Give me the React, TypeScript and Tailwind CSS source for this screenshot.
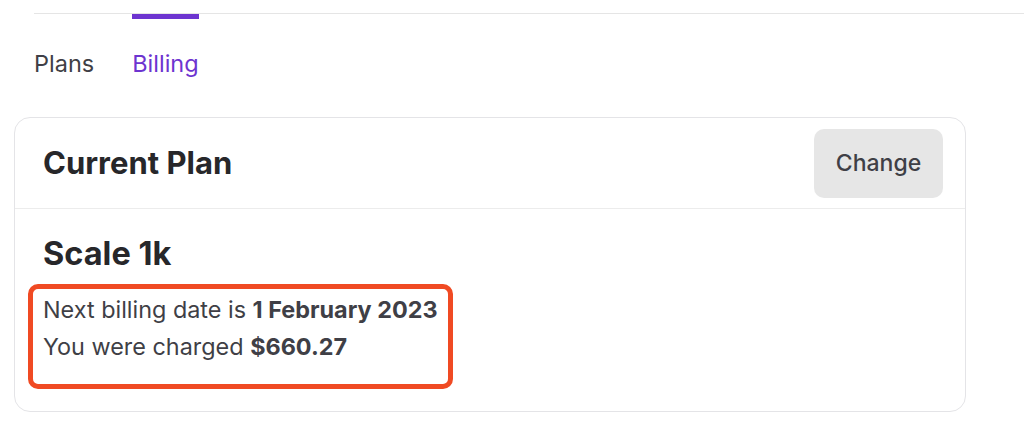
export default function App() {
  return (
    <div className="min-h-screen bg-white font-['Inter','Liberation_Sans',sans-serif] text-[#27272a]">
      <nav className="ml-[34px] mt-[13px] flex gap-[38px] border-t-[1.5px] border-[#e5e5e5]">
        <button className="border-t-[5px] border-transparent pt-[30px] text-[23.5px] leading-[30px] text-[#3f3f46]">
          Plans
        </button>
        <button className="border-t-[5px] border-[#6d34d0] pt-[30px] text-[23.5px] leading-[30px] text-[#6d34d0]">
          Billing
        </button>
      </nav>

      <section className="mx-[14px] mt-[38px] w-[952px] rounded-[16px] border border-[#e4e4e7]">
        <header className="flex h-[91px] items-center justify-between border-b border-[#ececec] pl-[28px] pr-[22px]">
          <h2 className="text-[31px] font-bold">Current Plan</h2>
          <button className="h-[69px] w-[129px] rounded-[10px] bg-[#e6e6e6] text-[23px] font-medium text-[#3f3f46]">
            Change
          </button>
        </header>

        <div className="px-[13px] pb-[22px] pt-[27px]">
          <h3 className="pl-[15px] text-[32.5px] font-bold leading-[36px]">Scale 1k</h3>
          <div className="mt-[12px] w-fit rounded-[10px] border-[5px] border-[#f04a23] pb-[19px] pl-[10px] pr-[11px] pt-[2px] text-[23.4px] leading-[37px] text-[#3f3f46]">
            <p>
              Next billing date is <b>1 February 2023</b>
            </p>
            <p>
              You were charged <b>$660.27</b>
            </p>
          </div>
        </div>
      </section>
    </div>
  )
}
